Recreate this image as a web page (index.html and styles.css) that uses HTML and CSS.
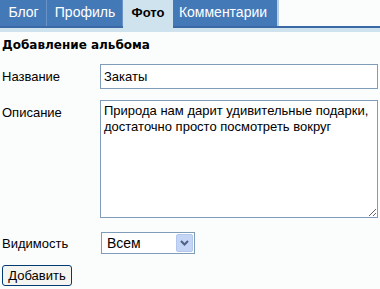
FILE: index.html
```html
<!DOCTYPE html>
<html>
<head>
    <title>Добавление альбома</title>
    <link rel="stylesheet" href="styles.css">
</head>
<body>
    <div class="tabs-bar">
        <ul class="tabs">
            <li class="tab tab-blog">Блог</li>
            <li class="tab tab-profile">Профиль</li>
            <li class="tab tab-photo active">Фото</li>
            <li class="tab tab-comments">Комментарии</li>
        </ul>
    </div>
    <div class="tabs-strip"></div>
    <div class="content">
        <h2>Добавление альбома</h2>
        <div class="form-row">
            <label for="title">Название</label>
            <input type="text" id="title" value="Закаты">
        </div>
        <div class="form-row">
            <label for="descr">Описание</label>
            <textarea id="descr">Природа нам дарит удивительные подарки, достаточно просто посмотреть вокруг</textarea>
        </div>
        <div class="form-row select-row">
            <label for="vis">Видимость</label>
            <div class="select">
                <span class="select-value">Всем</span>
                <span class="select-arrow">
                    <svg width="9" height="6" viewBox="0 0 9 6"><path d="M1 1 L4.5 4.5 L8 1" fill="none" stroke="#4d6185" stroke-width="2"/></svg>
                </span>
            </div>
        </div>
        <button class="btn">Добавить</button>
    </div>
</body>
</html>
```

FILE: styles.css
```css
* { box-sizing: border-box; }
body { margin: 0; background: #fbfdfd; font-family: "Liberation Sans", Arial, sans-serif; font-size: 13px; color: #000; }
.tabs-bar { background: #fbfdfd; border-bottom: 2px solid #3a69a6; }
.tabs { list-style: none; margin: 0; padding: 0; display: flex; width: 279px; background: #4479b8; }
.tab {
    color: #fff;
    font-size: 14px;
    height: 26px;
    line-height: 25px;
    text-align: center;
    border-right: 1px solid #6a94c8;
}
.tab-blog { width: 47px; padding-left: 1px; }
.tab-profile { width: 76px; padding-left: 1px; }
.tab-photo { width: 50px; }
.tab-comments { width: 106px; padding-right: 4px; }
.tab:last-child { border-right: 2px solid #b8cfe6; }
.tab.active {
    background: #cfe3ef;
    color: #000;
    font-weight: bold;
    font-size: 13px;
    height: 28px;
    margin-bottom: -2px;
    border-right: 0;
}
.tabs-strip { height: 4px; background: #cfe3ef; }
.content { padding: 0 2px; }
h2 { font-family: "DejaVu Sans", Verdana, sans-serif; font-size: 12px; line-height: 14px; font-weight: bold; margin: 6px 0 12px; }
.form-row { display: flex; align-items: flex-start; margin-bottom: 11px; }
.form-row label { width: 98px; padding-top: 5px; }
input[type="text"], textarea {
    flex: 1;
    border: 1px solid #7f9db9;
    font-family: inherit;
    font-size: 13px;
    padding: 2px 3px;
    margin: 0;
    background: #fff;
}
input[type="text"] { height: 25px; }
textarea { height: 118px; resize: vertical; line-height: 16px; }
.select-row { margin-top: 14px; align-items: center; }
.select-row label { padding-top: 0; }
.select {
    display: flex;
    align-items: center;
    width: 94px;
    height: 22px;
    border: 1px solid #7f9db9;
    background: #fff;
    margin-left: 1px;
}
.select-value { flex: 1; padding-left: 5px; font-size: 14px; }
.select-arrow {
    width: 17px;
    height: 18px;
    margin-right: 1px;
    background: #c5d5f6;
    border: 1px solid #b4c8ef;
    border-radius: 2px;
    display: flex;
    align-items: center;
    justify-content: center;
}
.btn {
    font-family: inherit;
    font-size: 13px;
    width: 70px;
    padding: 0;
    height: 21px;
    background: #f4f4f0;
    border: 1px solid #003c74;
    border-radius: 3px;
    margin: 0;
}
```
